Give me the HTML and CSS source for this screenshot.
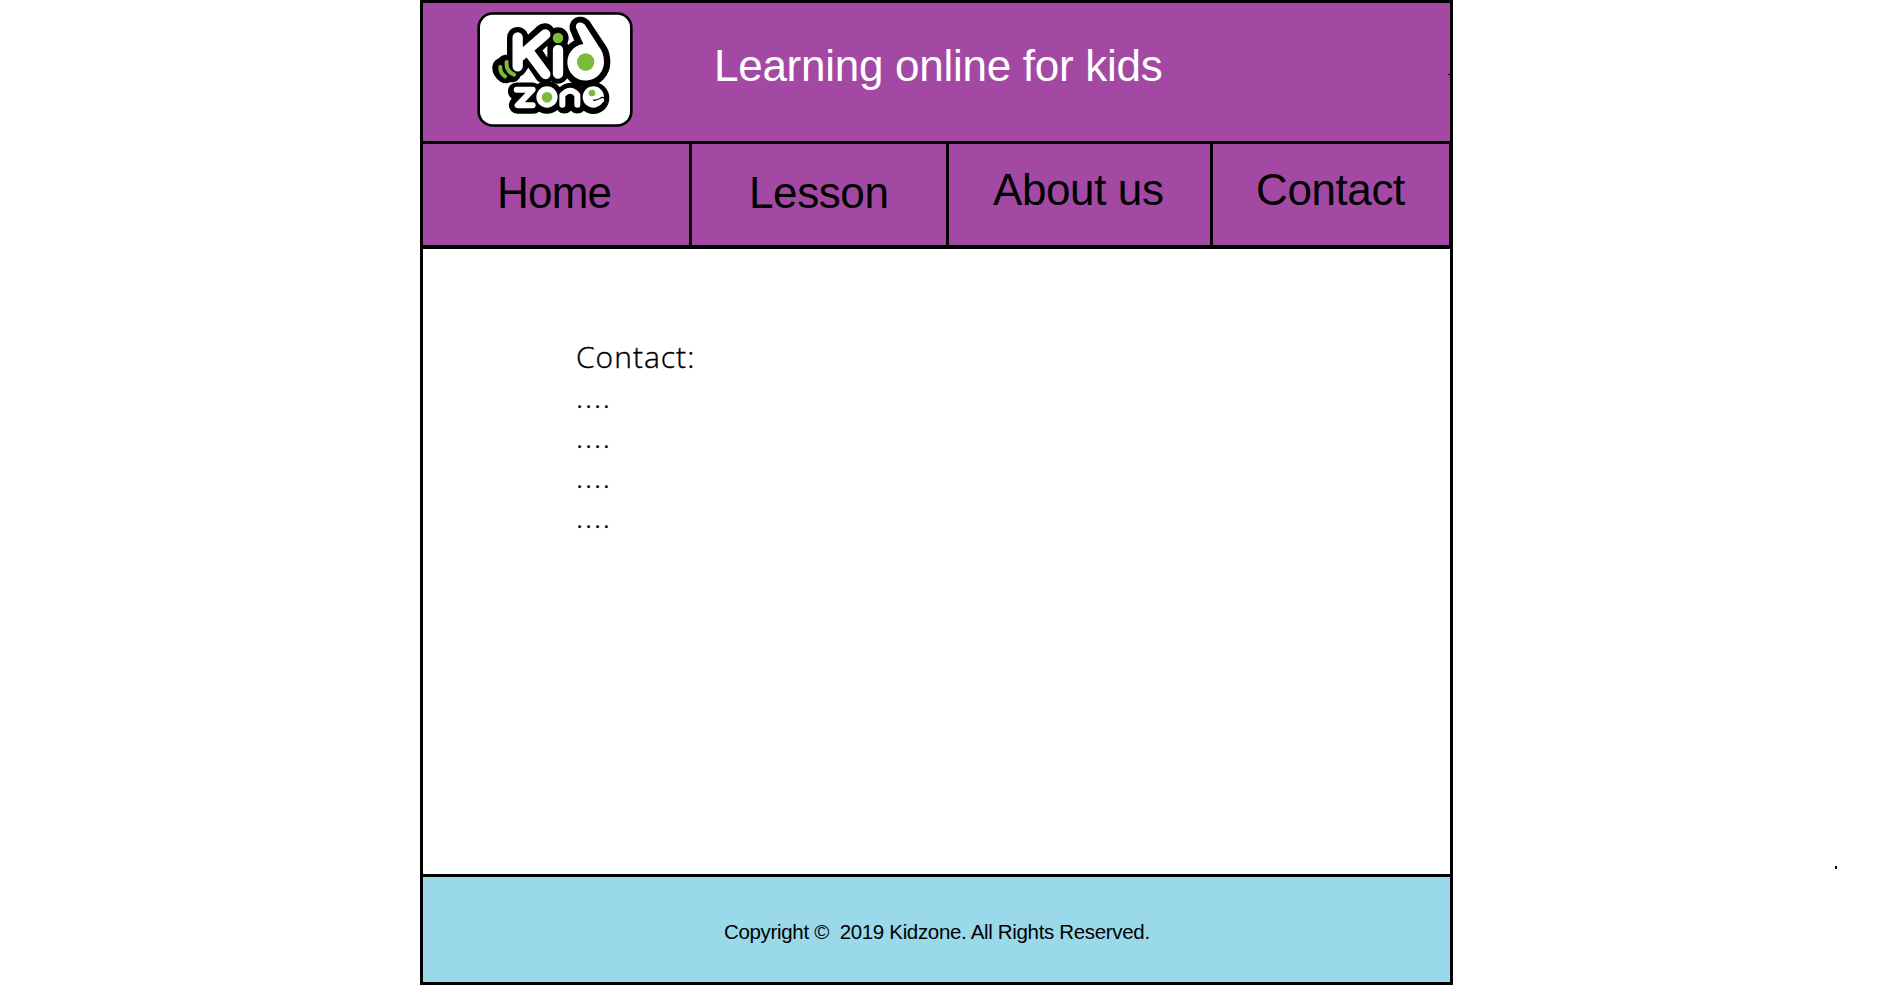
FILE: index.html
```html
<!DOCTYPE html>
<html lang="en">
<head>
<meta charset="utf-8">
<title>Kidzone - Contact</title>
<link rel="stylesheet" href="styles.css">
</head>
<body>
<div class="page">
  <header class="header">
    <svg class="logo" viewBox="21 21 468 345" role="img" aria-label="Kidzone">
      <rect x="26" y="25.500" width="458" height="336" rx="42" fill="#fff" stroke="#000" stroke-width="8"/>
      <g fill="none" stroke="#000" stroke-linecap="round" stroke-linejoin="round">
        <path stroke-width="64" d="M143 98V182M224 87L160 145M180 138L224 203M264 130V204"/>
        <path stroke-width="54" d="M94 186Q93 198 107 208M108 176Q110 195 126 205"/>
        <path stroke-width="53" d="M140 259H188L143 300H190M283 299V270Q302 250 322 270V299"/>
        <path stroke-width="38" fill="#000" d="M318 70C315 51 340 49 347 65L393 134Q402 148 402 172A55 55 0 1 1 338 118Z"/>
      </g>
      <circle cx="264" cy="99" r="32"/>
      <circle cx="231" cy="277" r="49"/>
      <circle cx="370" cy="279" r="48"/>
      <path fill="#fff" d="M174 190L199 227H147ZM284 230L292 220L300 230ZM230 124L224 134L232 146Z"/>
      <g fill="none" stroke="#fff" stroke-linecap="round" stroke-linejoin="round">
        <path stroke-width="31" d="M143 97V184M226 88L150 154M176 140L226 207M264 135V206"/>
        <path stroke-width="18" d="M140 254H188L143 301H188M277 299V270Q302 244 322 270V299"/>
      </g>
      <path fill="#fff" d="M318 68C315 49 340 47 347 63L393 134Q402 150 402 172A55 55 0 1 1 340 117Z"/>
      <circle cx="231" cy="276" r="32" fill="#fff"/>
      <circle cx="370" cy="276" r="32" fill="#fff"/>
      <path d="M368 284Q385 284 394 275L408 277L397 283Q386 283 372 289Z"/>
      <path d="M385 292L396 286" stroke="#fff" stroke-width="13" stroke-linecap="round"/>
      <g fill="#7cba38">
        <circle cx="264" cy="99" r="16"/>
        <circle cx="347" cy="171" r="26"/>
        <circle cx="231" cy="277" r="16"/>
        <circle cx="366" cy="264" r="10"/>
      </g>
      <path d="M91 186Q90 204 105 214M110 171Q107 198 132 209" fill="none" stroke="#7cba38" stroke-width="12" stroke-linecap="round"/>
    </svg>
    <h1 class="slogan">Learning online for kids</h1>
    <span class="tick"></span>
  </header>
  <nav class="nav">
    <a class="item home">Home</a>
    <a class="item lesson">Lesson</a>
    <a class="item about">About us</a>
    <a class="item contact">Contact</a>
  </nav>
  <main class="content">
    <p class="title">Contact:</p>
    <p class="line">....</p>
    <p class="line">....</p>
    <p class="line">....</p>
    <p class="line">....</p>
  </main>
  <footer class="footer"><span class="copyright">Copyright ©&nbsp; 2019 Kidzone. All Rights Reserved.</span></footer>
</div>
<span class="speck"></span>
</body>
</html>
```

FILE: styles.css
```css
* { box-sizing: border-box; }
body {
  margin: 0;
  background: #fff;
  color: #000;
  font-family: "Liberation Sans", Arial, sans-serif;
}
.page {
  display: flex;
  flex-direction: column;
  width: 1033px;
  height: 985px;
  margin-left: 420px;
  border: 3px solid #000;
}
.header {
  position: relative;
  display: flex;
  flex: none;
  height: 141px;
  padding: 9px 0 0 54px;
  border-bottom: 3px solid #000;
  background: #a349a4;
}
.logo { display: block; flex: none; width: 156px; height: 115px; }
.slogan {
  margin: 29px 0 0 81px;
  color: #fff;
  font-size: 44px;
  font-weight: 400;
  line-height: 50px;
  letter-spacing: -0.27px;
  white-space: nowrap;
}
.tick {
  position: absolute;
  right: 0;
  top: 71px;
  width: 2px;
  height: 1px;
  background: #000;
}
.nav {
  display: grid;
  grid-template-columns: 269px 257px 264px 237px;
  flex: none;
  height: 105px;
  border-bottom: 4px solid #000;
  background: #a349a4;
}
.item {
  border-right: 3px solid #000;
  font-size: 44px;
  line-height: 50px;
  letter-spacing: -0.4px;
  white-space: nowrap;
}
.home { padding: 24px 0 0 74px; letter-spacing: -0.8px; }
.lesson { padding: 24px 0 0 57px; }
.about { padding: 21px 0 0 44px; }
.contact { padding: 21px 0 0 43px; border-right-width: 1px; }
.content {
  flex: none;
  height: 625px;
  padding: 88px 0 0 153px;
  font-family: "Open Sans", "Noto Sans", sans-serif;
  font-size: 30px;
  font-weight: 300;
  line-height: 40px;
  letter-spacing: 1px;
  -webkit-text-stroke: 0.4px #000;
}
.title, .line { margin: 0; }
.line { letter-spacing: 1.8px; }
.footer {
  flex: 1;
  padding: 43px 0 0 301px;
  border-top: 3px solid #000;
  background: #99d9ea;
}
.copyright {
  display: block;
  font-size: 20.5px;
  line-height: 24px;
  letter-spacing: -0.33px;
  white-space: nowrap;
}
.speck {
  position: absolute;
  left: 1835px;
  top: 866px;
  width: 2px;
  height: 3px;
  background: #000;
}
```
